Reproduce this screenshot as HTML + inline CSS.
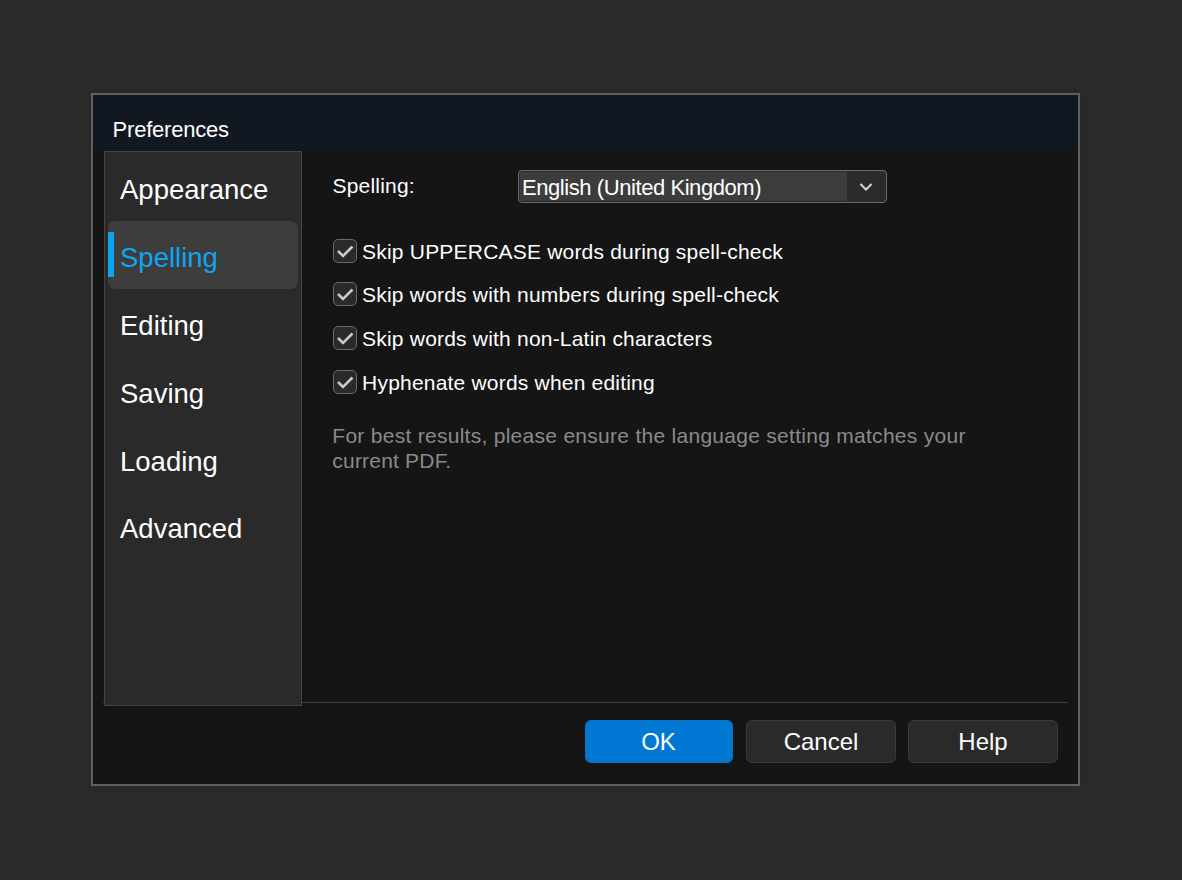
<!DOCTYPE html>
<html>
<head>
<meta charset="utf-8">
<style>
html,body{margin:0;padding:0;}
body{width:1182px;height:880px;background:#2b2b2b;position:relative;overflow:hidden;font-family:"Liberation Sans",sans-serif;color:#fff;}
.a{position:absolute;white-space:nowrap;line-height:1;}
#dlg{position:absolute;left:91px;top:93px;width:985px;height:689px;border:2px solid #606060;background:#151515;box-shadow:0 0 10px 2px rgba(0,0,0,0.07);}
#title{position:absolute;left:93px;top:95px;width:985px;height:55px;background:#111822;}
#side{position:absolute;left:104px;top:151px;width:196px;height:553px;border:1px solid #444;background:#2a2a2a;}
#sel{position:absolute;left:108px;top:221px;width:190px;height:68px;border-radius:7px;background:#3d3d3d;}
#bar{position:absolute;left:108px;top:232px;width:6px;height:45px;background:#0aa4f5;}
.nav{font-size:27.5px;left:120px;}
.c{font-size:21px;letter-spacing:0.2px;}
.cb{position:absolute;left:333px;width:22px;height:22px;border:1px solid #6a6a6a;border-radius:5px;background:#2a2a2a;}
.cb svg{position:absolute;left:0;top:0;}
#sep{position:absolute;left:103px;top:702px;width:965px;height:1px;background:#3e3e3e;}
.btn{position:absolute;top:720px;width:148px;height:41px;border:1px solid #3a3a3a;border-radius:6px;background:#2a2a2a;}
</style>
</head>
<body>
<div id="dlg"></div>
<div id="title"></div>
<div style="position:absolute;left:1068px;top:150px;width:10px;height:1px;background:#111822;"></div>
<div class="a" style="left:112.6px;top:119.4px;font-size:22px;letter-spacing:-0.22px;">Preferences</div>

<div id="sep"></div>
<div id="side"></div>
<div id="sel"></div>
<div id="bar"></div>
<div class="a nav" style="top:175.6px;">Appearance</div>
<div class="a nav" style="top:243.6px;color:#0ea6f0;">Spelling</div>
<div class="a nav" style="top:311.6px;">Editing</div>
<div class="a nav" style="top:379.6px;">Saving</div>
<div class="a nav" style="top:447.6px;">Loading</div>
<div class="a nav" style="top:514.6px;">Advanced</div>

<div class="a c" style="left:332.5px;top:174.7px;">Spelling:</div>
<div style="position:absolute;left:518px;top:170px;width:367px;height:31px;border:1px solid #6a6a6a;border-radius:4px;background:#2b2b2b;"></div>
<div style="position:absolute;left:520px;top:172px;width:327px;height:29px;background:#3c3c3c;"></div>
<svg style="position:absolute;left:855px;top:178px;" width="22" height="18" viewBox="0 0 22 18"><path d="M5.5 6 L11 11.5 L16.5 6" stroke="#d6d6d6" stroke-width="2" fill="none"/></svg>
<div class="a" style="left:522px;top:176.9px;font-size:22px;letter-spacing:-0.43px;">English (United Kingdom)</div>

<div class="cb" style="top:239px;"><svg width="22" height="22" viewBox="0 0 22 22"><path d="M4 11 L9 16 L18.5 6.5" stroke="#c9c9c9" stroke-width="2.6" fill="none"/></svg></div>
<div class="a c" style="left:362.1px;top:241px;">Skip UPPERCASE words during spell-check</div>
<div class="cb" style="top:282px;"><svg width="22" height="22" viewBox="0 0 22 22"><path d="M4 11 L9 16 L18.5 6.5" stroke="#c9c9c9" stroke-width="2.6" fill="none"/></svg></div>
<div class="a c" style="left:362.1px;top:284.1px;">Skip words with numbers during spell-check</div>
<div class="cb" style="top:326px;"><svg width="22" height="22" viewBox="0 0 22 22"><path d="M4 11 L9 16 L18.5 6.5" stroke="#c9c9c9" stroke-width="2.6" fill="none"/></svg></div>
<div class="a c" style="left:362.1px;top:328.1px;">Skip words with non-Latin characters</div>
<div class="cb" style="top:370px;"><svg width="22" height="22" viewBox="0 0 22 22"><path d="M4 11 L9 16 L18.5 6.5" stroke="#c9c9c9" stroke-width="2.6" fill="none"/></svg></div>
<div class="a c" style="left:362.1px;top:372.2px;">Hyphenate words when editing</div>

<div class="a c" style="left:332.3px;top:424.9px;color:#8a8a8a;letter-spacing:0.28px;">For best results, please ensure the language setting matches your</div>
<div class="a c" style="left:332.3px;top:450px;color:#8a8a8a;">current PDF.</div>

<div class="btn" style="left:585px;width:146px;background:#0078d4;border-color:#0a70c4;"></div>
<div class="btn" style="left:746px;"></div>
<div class="btn" style="left:908px;"></div>
<div class="a" style="left:584px;width:149px;text-align:center;top:730.4px;font-size:24px;">OK</div>
<div class="a" style="left:746px;width:150px;text-align:center;top:730.4px;font-size:24px;">Cancel</div>
<div class="a" style="left:908px;width:150px;text-align:center;top:730.4px;font-size:24px;">Help</div>
</body>
</html>
